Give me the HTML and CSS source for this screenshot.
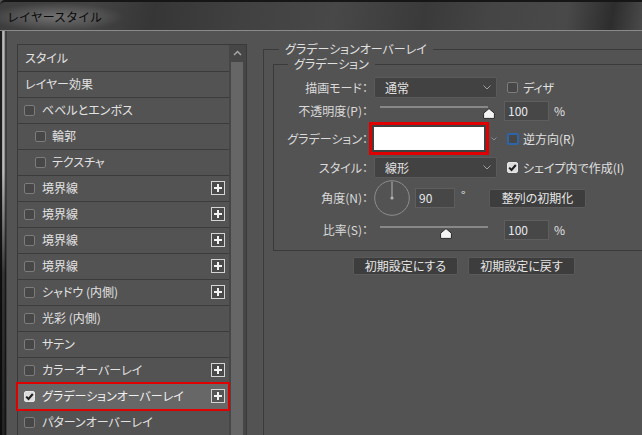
FILE: index.html
```html
<!DOCTYPE html>
<html lang="ja">
<head>
<meta charset="utf-8">
<title>レイヤースタイル</title>
<link rel="stylesheet" href="styles.css">
</head>
<body>
<div class="window">
  <div class="titlebar"><span class="title">レイヤースタイル</span></div>
  <div class="frame">
    <div class="frame-edge"></div>
    <div class="content">
      <div class="side">
        <ul class="list">
          <li class="row head">スタイル</li>
          <li class="row head">レイヤー効果</li>
          <li class="row"><span class="cb"></span><span class="lbl">ベベルとエンボス</span></li>
          <li class="row sub"><span class="cb"></span><span class="lbl">輪郭</span></li>
          <li class="row sub"><span class="cb"></span><span class="lbl">テクスチャ</span></li>
          <li class="row"><span class="cb"></span><span class="lbl">境界線</span><span class="plus"><svg width="14" height="14" viewBox="0 0 14 14"><rect x="0.5" y="0.5" width="13" height="13" fill="#4a4a4a" stroke="#d4d4d4"/><path d="M3 7h8M7 3v8" stroke="#f2f2f2" stroke-width="2"/></svg></span></li>
          <li class="row"><span class="cb"></span><span class="lbl">境界線</span><span class="plus"><svg width="14" height="14" viewBox="0 0 14 14"><rect x="0.5" y="0.5" width="13" height="13" fill="#4a4a4a" stroke="#d4d4d4"/><path d="M3 7h8M7 3v8" stroke="#f2f2f2" stroke-width="2"/></svg></span></li>
          <li class="row"><span class="cb"></span><span class="lbl">境界線</span><span class="plus"><svg width="14" height="14" viewBox="0 0 14 14"><rect x="0.5" y="0.5" width="13" height="13" fill="#4a4a4a" stroke="#d4d4d4"/><path d="M3 7h8M7 3v8" stroke="#f2f2f2" stroke-width="2"/></svg></span></li>
          <li class="row"><span class="cb"></span><span class="lbl">境界線</span><span class="plus"><svg width="14" height="14" viewBox="0 0 14 14"><rect x="0.5" y="0.5" width="13" height="13" fill="#4a4a4a" stroke="#d4d4d4"/><path d="M3 7h8M7 3v8" stroke="#f2f2f2" stroke-width="2"/></svg></span></li>
          <li class="row"><span class="cb"></span><span class="lbl">シャドウ (内側)</span><span class="plus"><svg width="14" height="14" viewBox="0 0 14 14"><rect x="0.5" y="0.5" width="13" height="13" fill="#4a4a4a" stroke="#d4d4d4"/><path d="M3 7h8M7 3v8" stroke="#f2f2f2" stroke-width="2"/></svg></span></li>
          <li class="row"><span class="cb"></span><span class="lbl">光彩 (内側)</span></li>
          <li class="row"><span class="cb"></span><span class="lbl">サテン</span></li>
          <li class="row"><span class="cb"></span><span class="lbl">カラーオーバーレイ</span><span class="plus"><svg width="14" height="14" viewBox="0 0 14 14"><rect x="0.5" y="0.5" width="13" height="13" fill="#4a4a4a" stroke="#d4d4d4"/><path d="M3 7h8M7 3v8" stroke="#f2f2f2" stroke-width="2"/></svg></span></li>
          <li class="row active"><span class="cb checked"><svg width="9" height="9" viewBox="0 0 9 9"><path d="M1.2 4.6 3.5 7 7.8 2" fill="none" stroke="#1e1e1e" stroke-width="2"/></svg></span><span class="lbl">グラデーションオーバーレイ</span><span class="plus"><svg width="14" height="14" viewBox="0 0 14 14"><rect x="0.5" y="0.5" width="13" height="13" fill="#555" stroke="#d4d4d4"/><path d="M3 7h8M7 3v8" stroke="#f2f2f2" stroke-width="2"/></svg></span></li>
          <li class="row"><span class="cb"></span><span class="lbl">パターンオーバーレイ</span></li>
        </ul>
        <div class="scrollbar">
          <div class="arrow"><svg width="9" height="6" viewBox="0 0 9 6"><path d="M1 5 4.5 1.5 8 5" fill="none" stroke="#a6a6a6" stroke-width="1.5"/></svg></div>
          <div class="thumb"></div>
        </div>
      </div>

      <div class="main">
        <fieldset class="group outer">
          <legend>グラデーションオーバーレイ</legend>
          <fieldset class="group inner">
            <legend>グラデーション</legend>
            <div class="form">
              <span class="label">描画モード：</span>
              <div class="select"><span>通常</span><svg class="chev" width="8" height="5" viewBox="0 0 8 5"><path d="M0.5 0.5 4 4 7.5 0.5" fill="none" stroke="#a0a0a0"/></svg></div>
              <div class="check"><span class="cb"></span><span>ディザ</span></div>

              <span class="label">不透明度(P)：</span>
              <div class="slider"><div class="track"></div><svg class="knob" style="left:103px" width="12" height="11" viewBox="0 0 12 11"><path d="M6 0.6 11.4 5.2V10.4H0.6V5.2Z" fill="#f4f4f4" stroke="#2a2a2a"/></svg></div>
              <div class="num"><span class="field">100</span><span class="unit">%</span></div>

              <span class="label">グラデーション：</span>
              <div class="swatch-wrap"><div class="swatch"><div class="swatch-fill"></div></div><svg class="mini-chev" width="6" height="4" viewBox="0 0 6 4"><path d="M0.5 0.5 3 3 5.5 0.5" fill="none" stroke="#8c8c8c"/></svg></div>
              <div class="check"><span class="cb blue"></span><span>逆方向(R)</span></div>

              <span class="label">スタイル：</span>
              <div class="select"><span>線形</span><svg class="chev" width="8" height="5" viewBox="0 0 8 5"><path d="M0.5 0.5 4 4 7.5 0.5" fill="none" stroke="#a0a0a0"/></svg></div>
              <div class="check"><span class="cb checked"><svg width="9" height="9" viewBox="0 0 9 9"><path d="M1.2 4.6 3.5 7 7.8 2" fill="none" stroke="#1e1e1e" stroke-width="2"/></svg></span><span>シェイプ内で作成(I)</span></div>

              <span class="label">角度(N)：</span>
              <div class="angle">
                <svg class="dial" width="36" height="36" viewBox="0 0 36 36"><circle cx="18" cy="18" r="17.3" fill="none" stroke="#8e8e8e"/><path d="M18 18V1.5" stroke="#b4b4b4"/><circle cx="18" cy="18" r="1.6" fill="#b4b4b4"/></svg>
                <span class="field small">90</span>
                <span class="deg">°</span>
                <span class="btn wide">整列の初期化</span>
              </div>

              <span class="label">比率(S)：</span>
              <div class="slider"><div class="track"></div><svg class="knob" style="left:60px" width="12" height="11" viewBox="0 0 12 11"><path d="M6 0.6 11.4 5.2V10.4H0.6V5.2Z" fill="#f4f4f4" stroke="#2a2a2a"/></svg></div>
              <div class="num"><span class="field">100</span><span class="unit">%</span></div>
            </div>
          </fieldset>
          <div class="buttons">
            <span class="btn b1">初期設定にする</span>
            <span class="btn b2">初期設定に戻す</span>
          </div>
        </fieldset>
      </div>
    </div>
  </div>
</div>
</body>
</html>
```

FILE: styles.css
```css
* { box-sizing: border-box; }
html, body { margin: 0; padding: 0; }
body {
  width: 642px;
  height: 435px;
  overflow: hidden;
  background: #535353;
  font-family: "Noto Sans CJK JP", "Noto Sans", sans-serif;
  font-size: 12px;
  line-height: 14px;
  color: #e0e0e0;
  font-feature-settings: "palt";
}

.window { display: flex; flex-direction: column; height: 435px; }

.titlebar {
  flex: none;
  height: 31px;
  border-top: 2px solid #161616;
  border-bottom: 1px solid #8a8a8a;
  border-top-left-radius: 5px;
  padding: 2px 0 0 7px;
  display: flex;
  align-items: center;
  background:
    radial-gradient(ellipse 68px 14px at 56px 15px, rgba(118,118,118,0.9), rgba(118,118,118,0) 100%),
    linear-gradient(100deg, #3d3d3d 0%, #444 14%, #363636 24%, #414141 38%, #484848 52%, #3a3a3a 66%, #454545 76%, #494949 88%, #2d2d2d 95%, #4a4a4a 100%);
}
.title {
  font-size: 12px;
  font-feature-settings: normal;
  color: #0a0a0a;
}

.frame { flex: 1; display: flex; min-height: 0; }
.frame-edge {
  flex: none;
  width: 6px;
  background:
    linear-gradient(to bottom, rgba(0,0,0,0) 0%, rgba(0,0,0,0) 35%, rgba(10,10,10,0.75) 60%, rgba(10,10,10,0.85) 100%),
    linear-gradient(to right, #1c1c1c 0, #1c1c1c 2px, #9c9c9c 2px, #c4c4c4 4px, #5a5a5a 5px, #2e2e2e 6px);
}
.content {
  flex: 1;
  display: flex;
  align-items: flex-start;
  border-left: 1px solid #3c3c3c;
  min-width: 0;
}

/* left list */
.side {
  flex: none;
  margin: 13px 0 0 10px;
  width: 230px;
  height: 400px;
  border: 1px solid #3a3a3a;
  display: flex;
}
.list {
  list-style: none;
  margin: 0;
  padding: 1px 0 0 0;
  width: 211px;
}
.row {
  position: relative;
  height: 26px;
  border-bottom: 1px solid #3b3b3b;
  display: flex;
  align-items: center;
  padding-left: 6px;
  padding-right: 4px;
  padding-bottom: 1px;
  color: #e2e2e2;
}
.row.head { padding-left: 7px; }
.row.sub { padding-left: 17px; }
.row .lbl { margin-left: 7px; flex: 1; white-space: nowrap; }
.row.sub .lbl { margin-left: 6px; }
.plus { display: flex; flex: none; }
.row.active { background: #676767; color: #f0f0f0; }
.row.active::after {
  content: "";
  position: absolute;
  top: -2px;
  bottom: -2px;
  left: -2px;
  right: -1px;
  border: 2px solid #e00000;
}

.cb {
  flex: none;
  width: 11px;
  height: 11px;
  border: 1px solid #7c7c7c;
  border-radius: 2px;
  background: #474747;
  display: flex;
  align-items: center;
  justify-content: center;
}
.cb.checked { background: #dcdcdc; border-color: #e6e6e6; }
.cb.blue { border: 2px solid #2f64a8; width: 12px; height: 12px; background: #474747; }

.scrollbar {
  flex: none;
  width: 17px;
  background: #464646;
  padding: 0 3px 0 2px;
  display: flex;
  flex-direction: column;
}
.arrow { height: 17px; display: flex; align-items: center; justify-content: center; padding-bottom: 1px; }
.thumb { flex: 1; background: #666666; }

/* right */
.main { flex: none; margin: 12px 0 0 16px; }
.group {
  margin: 0;
  padding: 0;
  border: 1px solid #3a3a3a;
  min-width: 0;
}
.group legend {
  padding: 0 6px;
  margin-left: 15px;
  line-height: 12px;
  color: #e0e0e0;
}
.outer { width: 420px; height: 420px; }
.inner {
  margin: 3px 0 0 9px;
  width: 400px;
  padding: 6px 0 6px 0;
}
.inner legend { margin-left: 14px; }

.form {
  display: grid;
  grid-template-columns: 95px 135px 1fr;
  grid-template-rows: 23px 23px 33px 25px 36px 28px;
  align-items: center;
}
.label {
  text-align: right;
  padding-right: 1px;
  white-space: nowrap;
  color: #dadada;
}

.select {
  margin-left: 5px;
  width: 123px;
  height: 21px;
  background: #424242;
  border: 1px solid #5a5a5a;
  border-radius: 2px;
  display: flex;
  align-items: center;
  justify-content: space-between;
  padding: 0 5px 0 10px;
}
.check { display: flex; align-items: center; margin-left: 3px; white-space: nowrap; }
.check .cb { margin-right: 5px; }
.check .cb.blue { margin-right: 4px; }

.slider {
  position: relative;
  margin-left: 11px;
  width: 108px;
  height: 15px;
}
.track { margin-top: 3px; height: 2px; background: #888888; }
.knob { position: absolute; top: 5px; }

.num { display: flex; align-items: center; }
.field {
  width: 45px;
  height: 20px;
  background: #474747;
  border: 1px solid #5e5e5e;
  padding-left: 3px;
  display: flex;
  align-items: center;
  color: #e4e8ee;
}
.field.small { width: 40px; }
.unit { margin-left: 5px; }

.swatch-wrap { display: flex; align-items: center; height: 33px; }
.swatch {
  width: 120px;
  height: 33px;
  border: 3px solid #e00000;
  padding: 2px;
  background: #404040;
}
.swatch-fill { width: 100%; height: 100%; background: #ffffff; }
.mini-chev { margin-left: 2px; }

.angle {
  grid-column: 2 / 4;
  display: flex;
  align-items: center;
  padding-left: 5px;
}
.angle .field { margin-left: 5px; }
.deg { margin-left: 6px; width: 28px; margin-top: -6px; }

.btn {
  display: inline-flex;
  align-items: center;
  justify-content: center;
  height: 19px;
  background: #3d3d3d;
  border: 1px solid #5a5a5a;
  border-radius: 2px;
  color: #e6e6e6;
  white-space: nowrap;
}
.btn.wide { width: 97px; }

.buttons {
  display: flex;
  gap: 10px;
  margin: 6px 0 0 89px;
}
.btn.b1 { width: 105px; height: 18px; }
.btn.b2 { width: 107px; height: 18px; }
```
